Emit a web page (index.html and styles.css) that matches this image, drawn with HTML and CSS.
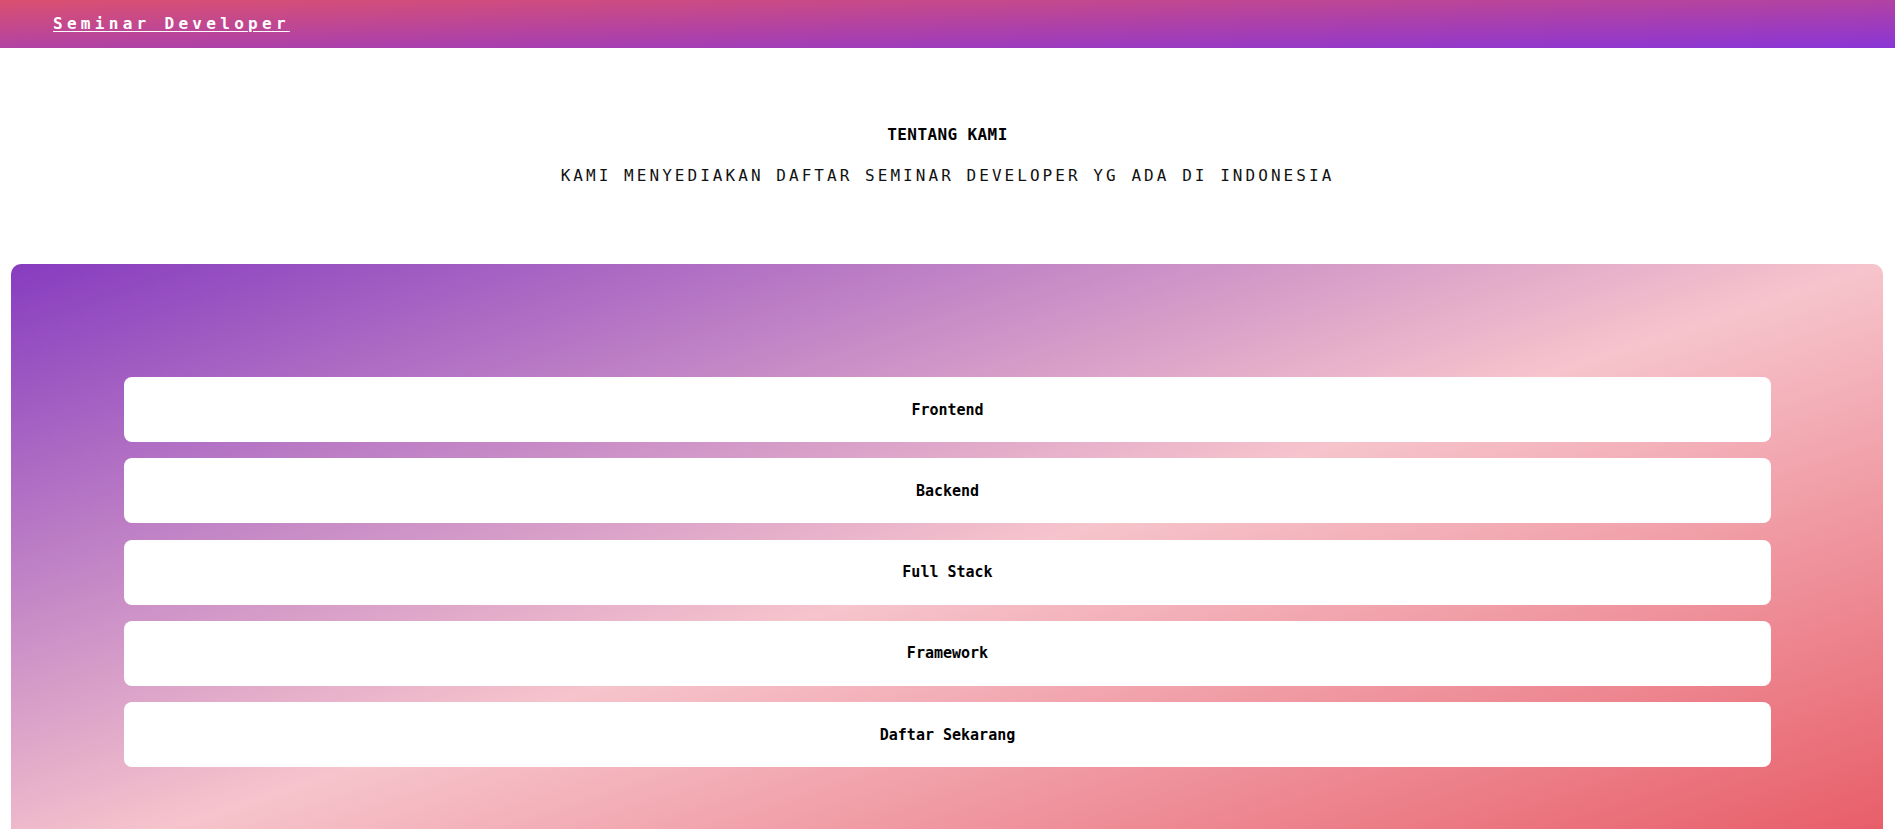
FILE: index.html
```html
<!DOCTYPE html>
<html lang="id">
<head>
<meta charset="utf-8">
<title>Seminar Developer</title>
<link rel="stylesheet" href="styles.css">
</head>
<body>
<header class="topbar">
  <a class="brand" href="#">Seminar Developer</a>
</header>
<section class="intro">
  <h1 class="intro-title">TENTANG KAMI</h1>
  <p class="intro-sub">KAMI MENYEDIAKAN DAFTAR SEMINAR DEVELOPER YG ADA DI INDONESIA</p>
</section>
<main class="panel">
  <div class="menu">
    <a class="menu-item" href="#">Frontend</a>
    <a class="menu-item" href="#">Backend</a>
    <a class="menu-item" href="#">Full Stack</a>
    <a class="menu-item" href="#">Framework</a>
    <a class="menu-item" href="#">Daftar Sekarang</a>
  </div>
</main>
</body>
</html>
```
FILE: styles.css
```css
* { box-sizing: border-box; }
html, body { margin: 0; padding: 0; }
body {
  font-family: "DejaVu Sans Mono", "Liberation Mono", monospace;
  background: #ffffff;
  color: #000;
}
.topbar {
  height: 48px;
  display: flex;
  align-items: center;
  padding: 0 0 2px 53px;
  background: linear-gradient(to bottom right, #da5070, #8a35d6);
}
.brand {
  color: #ffffff;
  font-size: 16px;
  font-weight: bold;
  line-height: 19px;
  letter-spacing: 4.3px;
  text-decoration: underline;
  text-underline-offset: 2px;
}
.intro {
  padding-top: 77px;
  padding-bottom: 79px;
  text-align: center;
}
.intro-title {
  margin: 0;
  font-size: 16px;
  font-weight: bold;
  line-height: 19px;
  letter-spacing: 0.4px;
  color: #000;
}
.intro-sub {
  margin: 22px 0 0;
  font-size: 16px;
  line-height: 19px;
  letter-spacing: 3.05px;
  color: #111;
}
.panel {
  margin: 0 12px 0 11px;
  padding: 113px 112px 113px 113px;
  border-radius: 10px;
  background: linear-gradient(to bottom right, #873cbf, #f6c4cc 50%, #e65560);
}
.menu {
  display: flex;
  flex-direction: column;
  gap: 16.25px;
}
.menu-item {
  height: 65px;
  display: flex;
  align-items: center;
  justify-content: center;
  background: #ffffff;
  border-radius: 8px;
  color: #000;
  font-size: 15px;
  font-weight: bold;
  text-decoration: none;
}
```
